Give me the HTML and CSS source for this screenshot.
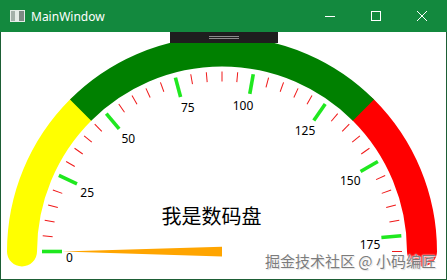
FILE: index.html
```html
<!DOCTYPE html>
<html>
<head>
<meta charset="utf-8">
<link rel="stylesheet" href="styles.css">
</head>
<body>
<div class="window">
  <div class="titlebar">
    <svg class="app-icon" viewBox="0 0 15 12">
      <rect x="0" y="0" width="15" height="12" fill="#e4ebe7"/>
      <rect x="1" y="1" width="4" height="10" fill="#a3b0a9"/>
      <rect x="9" y="1" width="5" height="10" fill="#7d8a84"/>
    </svg>
    <span class="title">MainWindow</span>
    <div class="controls">
      <div class="ctl"><svg viewBox="0 0 10 10"><line x1="0" y1="5.5" x2="10" y2="5.5" stroke="#fff" stroke-width="1"/></svg></div>
      <div class="ctl"><svg viewBox="0 0 10 10"><rect x="0.5" y="0.5" width="9" height="9" fill="none" stroke="#fff" stroke-width="1"/></svg></div>
      <div class="ctl"><svg viewBox="0 0 10 10"><path d="M0 0 L10 10 M10 0 L0 10" stroke="#fff" stroke-width="1"/></svg></div>
    </div>
  </div>
  <div class="content">
    <svg class="gauge" viewBox="1 32 445 247">
      <defs>
        <line id="mn" x1="42" y1="251.5" x2="52" y2="251.5" stroke="#f01818" stroke-width="1"/>
        <line id="mj" x1="42" y1="251.5" x2="62" y2="251.5" stroke="#1fe81f" stroke-width="3.6"/>
      </defs>
      <path d="M22 251.5 A200 200 0 0 1 80.58 110.08" fill="none" stroke="#ffff00" stroke-width="30" stroke-linecap="round"/>
      <path d="M363.42 110.08 A200 200 0 0 1 422 251.5" fill="none" stroke="#ff0000" stroke-width="30" stroke-linecap="round"/>
      <path d="M80.58 110.08 A200 200 0 0 1 363.42 110.08" fill="none" stroke="#008000" stroke-width="30"/>
      <g>
        <use href="#mj" transform="rotate(0 222 251.5)"/>
        <use href="#mn" transform="rotate(5 222 251.5)"/>
        <use href="#mn" transform="rotate(10 222 251.5)"/>
        <use href="#mn" transform="rotate(15 222 251.5)"/>
        <use href="#mn" transform="rotate(20 222 251.5)"/>
        <use href="#mj" transform="rotate(25 222 251.5)"/>
        <use href="#mn" transform="rotate(30 222 251.5)"/>
        <use href="#mn" transform="rotate(35 222 251.5)"/>
        <use href="#mn" transform="rotate(40 222 251.5)"/>
        <use href="#mn" transform="rotate(45 222 251.5)"/>
        <use href="#mj" transform="rotate(50 222 251.5)"/>
        <use href="#mn" transform="rotate(55 222 251.5)"/>
        <use href="#mn" transform="rotate(60 222 251.5)"/>
        <use href="#mn" transform="rotate(65 222 251.5)"/>
        <use href="#mn" transform="rotate(70 222 251.5)"/>
        <use href="#mj" transform="rotate(75 222 251.5)"/>
        <use href="#mn" transform="rotate(80 222 251.5)"/>
        <use href="#mn" transform="rotate(85 222 251.5)"/>
        <use href="#mn" transform="rotate(90 222 251.5)"/>
        <use href="#mn" transform="rotate(95 222 251.5)"/>
        <use href="#mj" transform="rotate(100 222 251.5)"/>
        <use href="#mn" transform="rotate(105 222 251.5)"/>
        <use href="#mn" transform="rotate(110 222 251.5)"/>
        <use href="#mn" transform="rotate(115 222 251.5)"/>
        <use href="#mn" transform="rotate(120 222 251.5)"/>
        <use href="#mj" transform="rotate(125 222 251.5)"/>
        <use href="#mn" transform="rotate(130 222 251.5)"/>
        <use href="#mn" transform="rotate(135 222 251.5)"/>
        <use href="#mn" transform="rotate(140 222 251.5)"/>
        <use href="#mn" transform="rotate(145 222 251.5)"/>
        <use href="#mj" transform="rotate(150 222 251.5)"/>
        <use href="#mn" transform="rotate(155 222 251.5)"/>
        <use href="#mn" transform="rotate(160 222 251.5)"/>
        <use href="#mn" transform="rotate(165 222 251.5)"/>
        <use href="#mn" transform="rotate(170 222 251.5)"/>
        <use href="#mj" transform="rotate(175 222 251.5)"/>
        <use href="#mn" transform="rotate(180 222 251.5)"/>
      </g>
      <g class="labels">
        <text x="69.5" y="262">0</text>
        <text x="87.2" y="196.7">25</text>
        <text x="128.3" y="142.7">50</text>
        <text x="187.8" y="112">75</text>
        <text x="243" y="110">100</text>
        <text x="305" y="135">125</text>
        <text x="350.3" y="185">150</text>
        <text x="370" y="249.3">175</text>
      </g>
      <polygon points="62,251.6 222,246.8 222,256.6" fill="#ffa500"/>
    </svg>
    <div class="devbar"><span class="grip"></span></div>
    <div class="caption">我是数码盘</div>
    <div class="watermark">掘金技术社区 @ 小码编匠</div>
  </div>
</div>
</body>
</html>
```
FILE: styles.css
```css
html, body {
  margin: 0;
  padding: 0;
  background: #ffffff;
}

body {
  width: 447px;
  height: 280px;
  overflow: hidden;
}

.window {
  width: 447px;
  height: 280px;
  display: flex;
  flex-direction: column;
}

.titlebar {
  height: 32px;
  flex: none;
  background: #13893e;
  color: #ffffff;
  display: flex;
  align-items: center;
  font-family: "Noto Sans", "Open Sans", sans-serif;
  font-size: 12px;
}

.app-icon {
  width: 15px;
  height: 12px;
  margin-left: 10px;
  margin-right: 6px;
  flex: none;
}

.title {
  padding-top: 2px;
  line-height: 16px;
}

.controls {
  margin-left: auto;
  margin-right: 2px;
  height: 32px;
  display: flex;
}

.ctl {
  width: 46px;
  display: flex;
  align-items: center;
  justify-content: center;
}

.ctl svg {
  width: 10px;
  height: 10px;
  display: block;
}

.content {
  flex: 1;
  position: relative;
  background: #ffffff;
  border: 1px solid #1d5e35;
  border-top: 0;
}

.gauge {
  display: block;
  width: 445px;
  height: 247px;
}

.labels text {
  font-family: "Noto Sans", "Open Sans", sans-serif;
  font-size: 12px;
  fill: #000000;
  text-anchor: middle;
}

.devbar {
  position: absolute;
  top: 0;
  left: 169px;
  width: 108px;
  height: 11px;
  background: #1e1e1e;
}

.grip {
  position: absolute;
  left: 39px;
  top: 4px;
  width: 30px;
  height: 1px;
  border-top: 1px solid #8c8c8c;
  border-bottom: 1px solid #8c8c8c;
}

.caption {
  position: absolute;
  left: 160.5px;
  top: 173.5px;
  font-family: "Noto Sans CJK SC", sans-serif;
  font-size: 20px;
  line-height: 20px;
  color: #000000;
  white-space: nowrap;
}

.watermark {
  position: absolute;
  left: 264px;
  top: 221px;
  font-family: "Noto Sans CJK SC", sans-serif;
  font-size: 15px;
  line-height: 15px;
  color: #7c7c7c;
  white-space: nowrap;
  text-shadow: 0 0 1px #ffffff, 0 0 2px #ffffff, 1px 1px 1px #d8d8d8;
}
```
